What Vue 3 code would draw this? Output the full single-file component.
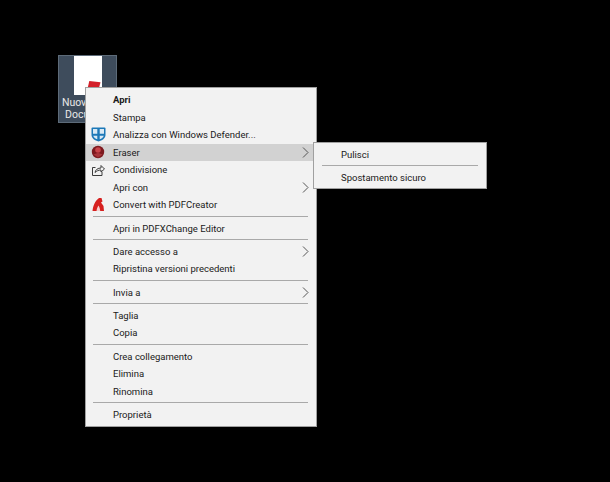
<template>
  <div class="desktop">
    <div class="file-icon">
      <div class="sheet"><div class="badge"></div></div>
      <div class="file-name">Nuovo Doc<br>Documen</div>
    </div>

    <div class="menu main-menu">
      <template v-for="(item, i) in items" :key="i">
        <div v-if="item.sep" class="sep"></div>
        <div v-else class="row" :class="{ active: item.active, bold: item.bold }">
          <span class="ico">
            <svg v-if="item.icon === 'defender'" width="15" height="15" viewBox="0 0 15 15">
              <path d="M.5 1.500Q.5.500 1.500.500h12q1 0 1 1V8c0 3.500-3.500 5.500-7 6.500C4 13.500.5 11.500.5 8z" fill="#1c78b8"/>
              <path d="M2 2h4.300v4.700H2zM8.700 2H13v4.700H8.700zM2.200 8.700h4.100v3.600C4.400 11.500 2.900 10.400 2.200 8.700zM8.700 8.700h4.100c-.7 1.700-2.200 2.800-4.100 3.600z" fill="#d8e9f5"/>
            </svg>
            <svg v-else-if="item.icon === 'eraser'" width="14" height="14" viewBox="0 0 14 14">
              <circle cx="7" cy="7" r="6.200" fill="#7d1a1f"/>
              <circle cx="7" cy="5" r="2.800" fill="#c9444a"/>
              <path d="M2.500 9.500L7 7.800l4.500 1.700L7 12.500z" fill="#a8353a"/>
            </svg>
            <svg v-else-if="item.icon === 'share'" width="14" height="14" viewBox="0 0 14 14" fill="none" stroke="#3c3c3c" stroke-width="1">
              <path d="M4.500 4.500H1.500v8h9.500V9"/>
              <path d="M4 9.500c.5-3 3-4.500 6-4.500V2.500L13.500 6 10 9V7c-2.500 0-4.500 1-6 2.500z"/>
            </svg>
            <svg v-else-if="item.icon === 'pdf'" width="14" height="15" viewBox="0 0 14 15">
              <path d="M1.500 14C2 9 4 4 8 1h2.500l1 3.500-1.500 1 2.500 3.500.5 5z" fill="#d6201f"/>
              <path d="M5.500 14c.2-2 1-4 2-5.500 1 1.500 1.500 3.500 1.700 5.500z" fill="#f6d0cf"/>
            </svg>
          </span>
          <span>{{ item.label }}</span>
          <svg v-if="item.arrow" class="arrow" width="7" height="11" viewBox="0 0 7 11" fill="none" stroke="#555" stroke-width="1">
            <path d="M1 .5l5 5-5 5"/>
          </svg>
        </div>
      </template>
    </div>

    <div class="menu sub-menu">
      <div class="row sub-row"><span class="ico"></span><span>Pulisci</span></div>
      <div class="sep sub-sep"></div>
      <div class="row sub-row"><span class="ico"></span><span>Spostamento sicuro</span></div>
    </div>
  </div>
</template>

<script setup>
const items = [
  { label: 'Apri', bold: true },
  { label: 'Stampa' },
  { label: 'Analizza con Windows Defender...', icon: 'defender' },
  { label: 'Eraser', icon: 'eraser', arrow: true, active: true },
  { label: 'Condivisione', icon: 'share' },
  { label: 'Apri con', arrow: true },
  { label: 'Convert with PDFCreator', icon: 'pdf' },
  { sep: true },
  { label: 'Apri in PDFXChange Editor' },
  { sep: true },
  { label: 'Dare accesso a', arrow: true },
  { label: 'Ripristina versioni precedenti' },
  { sep: true },
  { label: 'Invia a', arrow: true },
  { sep: true },
  { label: 'Taglia' },
  { label: 'Copia' },
  { sep: true },
  { label: 'Crea collegamento' },
  { label: 'Elimina' },
  { label: 'Rinomina' },
  { sep: true },
  { label: 'Proprietà' }
]
</script>

<style>
body { background: #000; }
</style>

<style scoped>
.desktop {
  position: relative;
  width: 610px;
  height: 482px;
  background: #000;
  overflow: hidden;
  font-family: Roboto, "Noto Sans", sans-serif;
  font-size: 9.500px;
  color: #1a1a1a;
}
.file-icon {
  position: absolute;
  left: 58px;
  top: 55px;
  width: 59px;
  height: 68px;
  box-sizing: border-box;
  background: #3e4c5c;
  border: 1px solid #5d6b79;
  display: flex;
  flex-direction: column;
  align-items: center;
}
.sheet {
  position: relative;
  width: 28px;
  height: 39px;
  background: #fff;
  flex: none;
}
.badge {
  position: absolute;
  right: 1px;
  bottom: 2px;
  width: 14px;
  height: 12px;
  background: #d3202a;
  clip-path: polygon(20% 0, 100% 10%, 80% 100%, 0 100%);
}
.file-name {
  margin-top: 2px;
  font-size: 10.500px;
  line-height: 12px;
  color: #e8e8e8;
  text-align: center;
  white-space: nowrap;
}
.menu {
  position: absolute;
  box-sizing: border-box;
  background: #f2f2f2;
  border: 1px solid #a0a0a0;
}
.main-menu {
  left: 85px;
  top: 87px;
  width: 232px;
  height: 340px;
  padding-top: 3px;
}
.sub-menu {
  left: 313px;
  top: 142px;
  width: 174px;
  height: 47px;
  padding-top: 1.500px;
}
.row {
  display: flex;
  align-items: center;
  height: 17.500px;
  padding-left: 5px;
  white-space: nowrap;
}
.row.active { background: #d2d2d2; }
.row.bold { font-weight: 700; }
.ico {
  width: 22px;
  flex: none;
  display: flex;
  align-items: center;
}
.arrow {
  margin-left: auto;
  margin-right: 7px;
}
.sep {
  height: 1px;
  background: #a9a9a9;
  margin: 2.400px 8px 2.400px 7px;
}
.sub-row { height: 19px; }
.sub-sep { margin: 1.500px 8px 1.500px 8px; }
</style>
